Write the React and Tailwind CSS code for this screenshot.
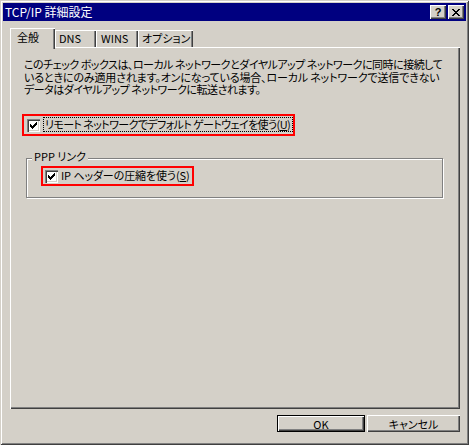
import React from 'react';

const CHECK_COLS = [5, 6, 7, 6, 5, 4, 3];
const X_ROWS = [
    [[0, 2], [6, 2]],
    [[1, 2], [5, 2]],
    [[2, 4]],
    [[3, 2]],
    [[2, 4]],
    [[1, 2], [5, 2]],
    [[0, 2], [6, 2]],
];

function CheckBox() {
    return (
        <span className="block w-[13px] h-[13px] flex-none bg-white shadow-[inset_1px_1px_#808080,inset_2px_2px_#404040,inset_-1px_-1px_#ffffff,inset_-2px_-2px_#d4d0c8]">
            <svg width="13" height="13" viewBox="0 0 13 13" shapeRendering="crispEdges" className="block">
                {CHECK_COLS.map((y, i) => (
                    <rect key={i} x={3 + i} y={y} width="1" height="3" fill="#000"/>
                ))}
            </svg>
        </span>
    );
}

function TitleButton({children}) {
    return (
        <span className="w-[16px] h-[14px] flex items-center justify-center bg-[#d4d0c8] shadow-[inset_1px_1px_#ffffff,inset_-1px_-1px_#404040,inset_-2px_-2px_#808080]">
            {children}
        </span>
    );
}

const tabShadow = 'shadow-[inset_1px_0_#ffffff,inset_0_1px_#ffffff,inset_-1px_0_#404040,inset_-2px_0_#808080]';

export default function App() {
    return (
        <div className="w-[469px] h-[445px] bg-[#d4d0c8] p-[3px] flex flex-col text-[11px] text-black font-['Noto_Sans_CJK_JP',sans-serif] [font-feature-settings:'palt'] shadow-[inset_1px_1px_#d4d0c8,inset_-1px_-1px_#404040,inset_2px_2px_#ffffff,inset_-2px_-2px_#808080]">
            {/* Title bar */}
            <div className="h-[18px] flex-none bg-[#000080] flex items-center pl-[2px] pr-[2px] gap-[2px]">
                <span className="flex-1 text-white text-[12px] leading-[18px] whitespace-nowrap">TCP/IP 詳細設定</span>
                <TitleButton>
                    <span className="font-['Liberation_Sans',sans-serif] font-bold text-[11px] leading-[11px] mt-[1px]">?</span>
                </TitleButton>
                <TitleButton>
                    <svg width="8" height="7" viewBox="0 0 8 7" shapeRendering="crispEdges" className="block">
                        {X_ROWS.map((row, y) => row.map(([x, w], k) => (
                            <rect key={`${y}-${k}`} x={x} y={y} width={w} height="1" fill="#000"/>
                        )))}
                    </svg>
                </TitleButton>
            </div>

            {/* Tabs */}
            <div className="mt-[7px] h-[19px] flex-none flex items-end pl-[7px]">
                <div className={`relative z-10 w-[45px] h-[21px] -mb-[2px] pt-[2px] pl-[7px] leading-[14px] bg-[#d4d0c8] ${tabShadow}`}>全般</div>
                <div className={`w-[41px] h-[17px] pt-[1px] pl-[4px] leading-[14px] ${tabShadow}`}>DNS</div>
                <div className={`w-[42px] h-[17px] pt-[1px] pl-[5px] leading-[14px] ${tabShadow}`}>WINS</div>
                <div className={`w-[55px] h-[17px] pt-[1px] pl-[4px] leading-[14px] ${tabShadow}`}>オプション</div>
            </div>

            {/* Tab panel */}
            <div className="ml-[7px] w-[450px] h-[362px] flex-none flex flex-col shadow-[inset_1px_1px_#ffffff,inset_-1px_-1px_#404040,inset_-2px_-2px_#808080]">
                <div className="ml-[14px] mt-[11px] h-[38px] leading-[12.5px] tracking-[-0.5px] whitespace-nowrap">
                    このチェック ボックスは、ローカル ネットワークとダイヤルアップ ネットワークに同時に接続して<br/>
                    <span className="tracking-[-0.15px]">いるときにのみ適用されます。オンになっている場合、ローカル ネットワークで送信できない</span><br/>
                    データはダイヤルアップ ネットワークに転送されます。
                </div>

                {/* Default gateway */}
                <div className="ml-[12px] mt-[18px] w-[273px] h-[22px] border-2 border-[#ff0000] flex items-start pl-[3px] pt-[1px]">
                    <span className="mt-[2px]"><CheckBox/></span>
                    <span className="ml-[3px] h-[15px] w-[250px] px-[1px] border border-dotted border-black leading-[13px] tracking-[-0.6px] whitespace-nowrap">
                        リモート ネットワークでデフォルト ゲートウェイを使う(<span className="underline">U</span>)
                    </span>
                </div>

                {/* PPP link group */}
                <div className="relative ml-[16px] mt-[22px] w-[417px] h-[40px] border border-[#808080] shadow-[1px_1px_0_#ffffff,inset_1px_1px_0_#ffffff]">
                    <span className="absolute left-[5px] -top-[10px] px-[2px] bg-[#d4d0c8] leading-[14px] whitespace-nowrap">PPP リンク</span>
                    <div className="ml-[14px] mt-[7px] w-[153px] h-[20px] border-2 border-[#ff0000] flex items-start pl-[2px]">
                        <span className="mt-[2px]"><CheckBox/></span>
                        <span className="ml-[3px] leading-[14px] tracking-[-0.1px] whitespace-nowrap">
                            IP ヘッダーの圧縮を使う(<span className="underline">S</span>)
                        </span>
                    </div>
                </div>
            </div>

            {/* Buttons */}
            <div className="mt-[6px] flex justify-end gap-[2px] pr-[6px]">
                <button className="w-[88px] h-[17px] border border-black bg-[#d4d0c8] leading-[14px] shadow-[inset_1px_1px_#ffffff,inset_-1px_-1px_#404040,inset_-2px_-2px_#808080]">OK</button>
                <button className="w-[93px] h-[17px] bg-[#d4d0c8] leading-[14px] shadow-[inset_1px_1px_#ffffff,inset_-1px_-1px_#404040,inset_-2px_-2px_#808080]">キャンセル</button>
            </div>
        </div>
    );
}
